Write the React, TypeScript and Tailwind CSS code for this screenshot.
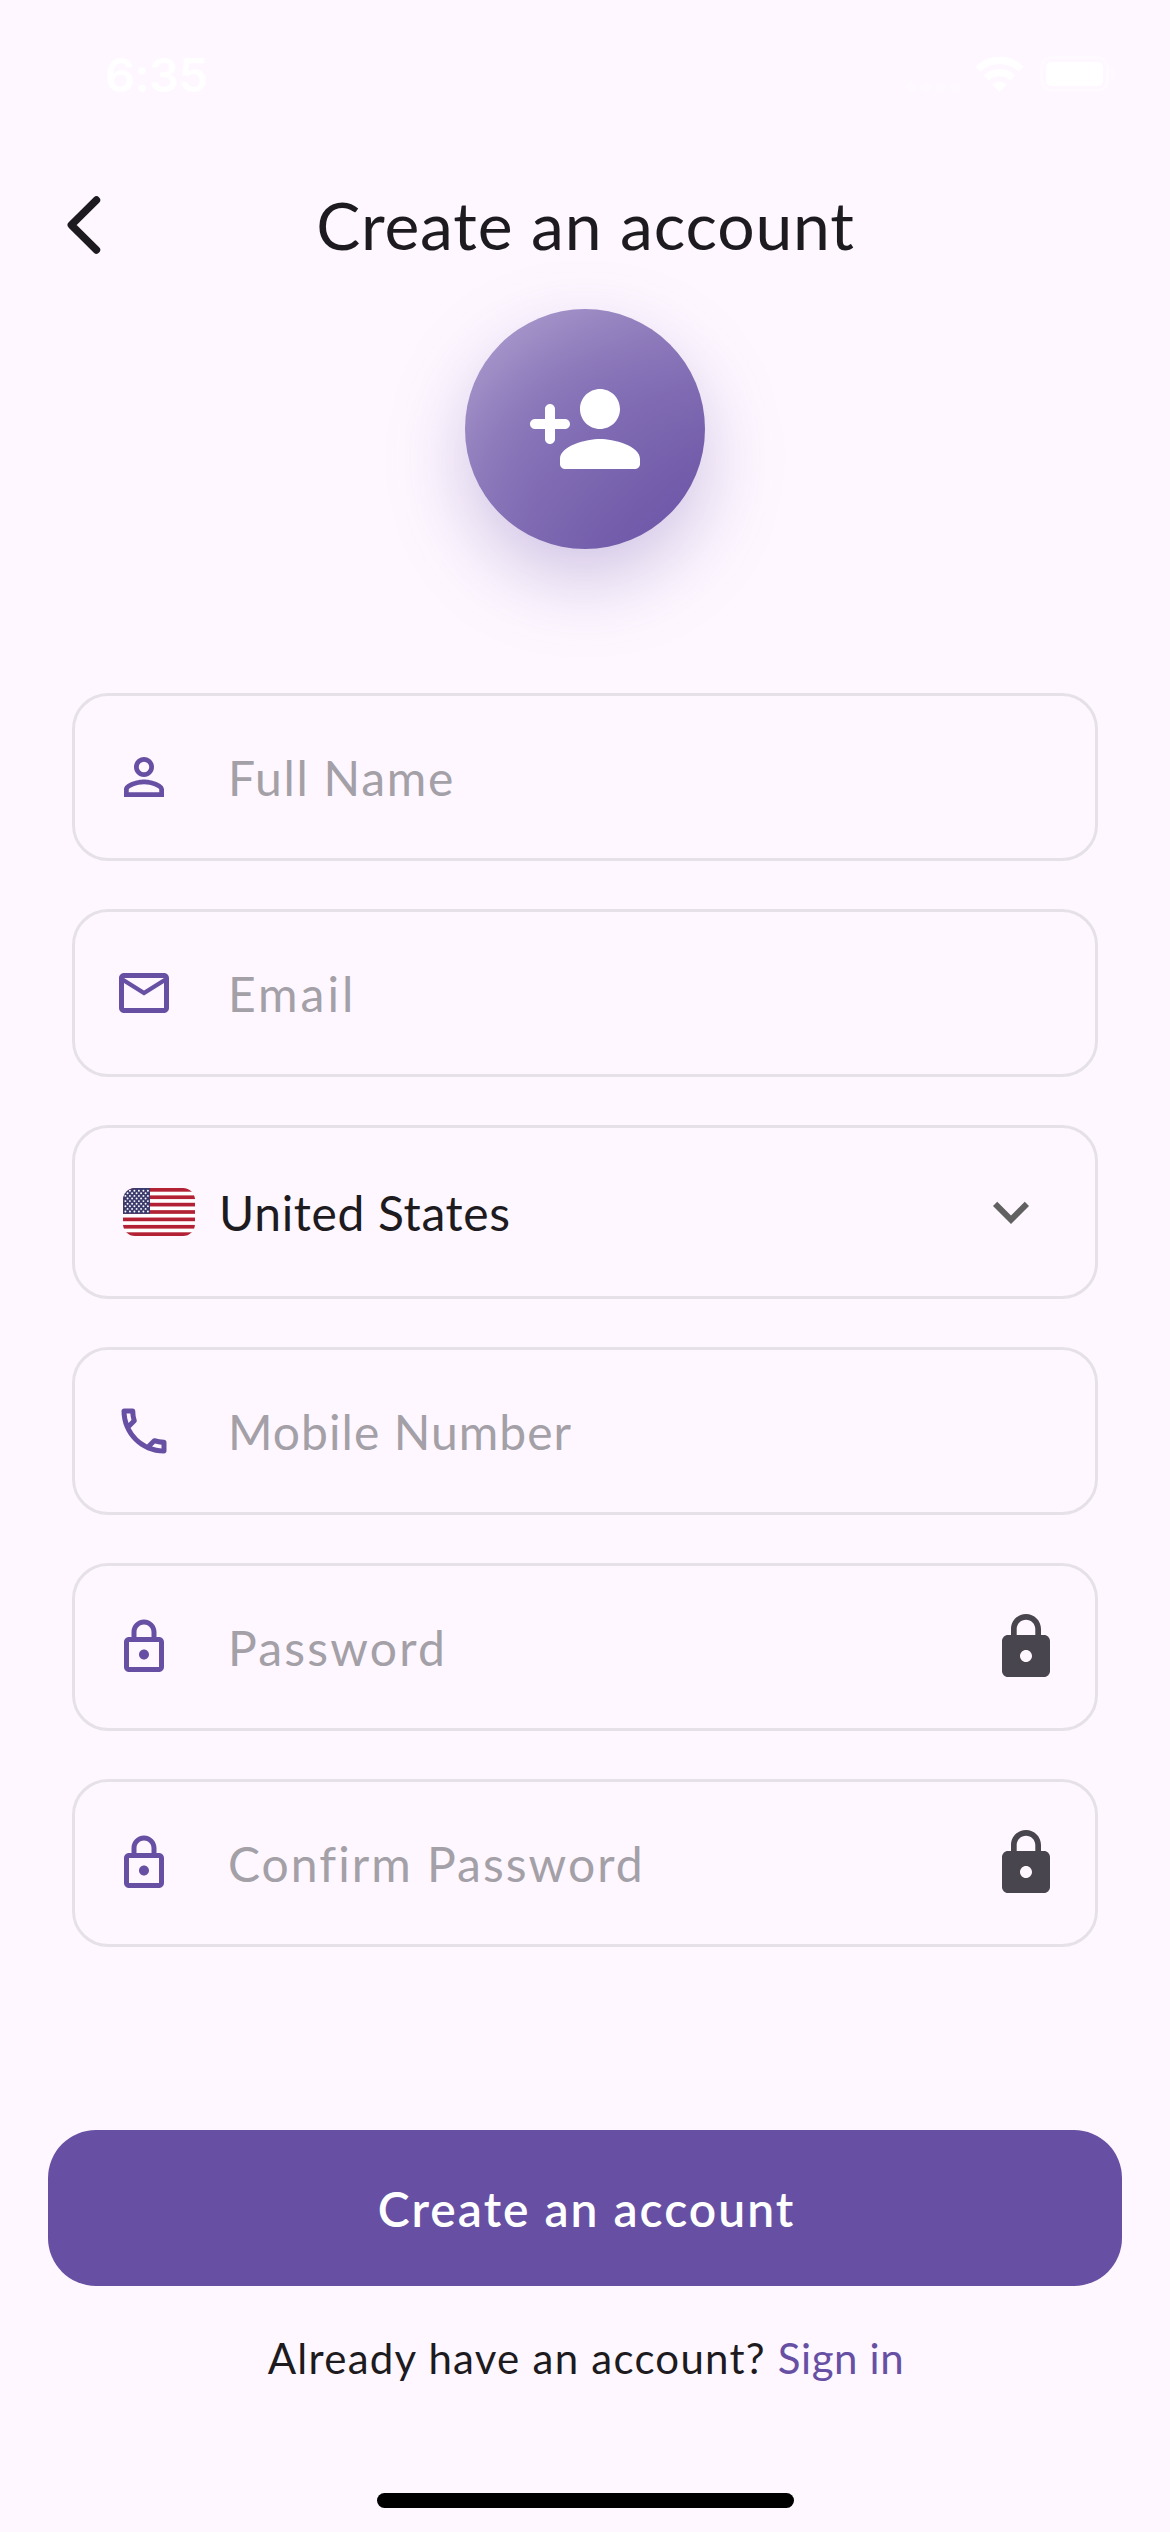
import type { ReactNode } from 'react';

const PATHS = {
  personAdd:
    'M15 12c2.21 0 4-1.79 4-4s-1.79-4-4-4-4 1.79-4 4 1.79 4 4 4zm-9-2V8c0-.55-.45-1-1-1s-1 .45-1 1v2H2c-.55 0-1 .45-1 1s.45 1 1 1h2v2c0 .55.45 1 1 1s1-.45 1-1v-2h2c.55 0 1-.45 1-1s-.45-1-1-1H6zm9 4c-2.67 0-8 1.34-8 4v1c0 .55.45 1 1 1h14c.55 0 1-.45 1-1v-1c0-2.66-5.33-4-8-4z',
  person:
    'M12 5.9a2.1 2.1 0 1 1 0 4.2 2.1 2.1 0 0 1 0-4.2m0 9c2.97 0 6.1 1.46 6.1 2.1v1.1H5.9V17c0-.64 3.13-2.1 6.1-2.1M12 4C9.79 4 8 5.79 8 8s1.79 4 4 4 4-1.79 4-4-1.79-4-4-4zm0 9c-2.67 0-8 1.34-8 4v3h16v-3c0-2.66-5.33-4-8-4z',
  mail:
    'M22 6c0-1.1-.9-2-2-2H4c-1.1 0-2 .9-2 2v12c0 1.1.9 2 2 2h16c1.1 0 2-.9 2-2V6zm-2 0-8 5-8-5h16zm0 12H4V8l8 5 8-5v10z',
  phone:
    'M6.54 5c.06.89.21 1.76.45 2.59l-1.2 1.2c-.41-1.2-.67-2.47-.76-3.79h1.51m9.86 12.02c.85.24 1.72.39 2.6.45v1.49c-1.32-.09-2.59-.35-3.8-.75l1.2-1.19M7.5 3H4c-.55 0-1 .45-1 1 0 9.39 7.61 17 17 17 .55 0 1-.45 1-1v-3.49c0-.55-.45-1-1-1-1.24 0-2.45-.2-3.57-.57a.84.84 0 0 0-.31-.05c-.26 0-.51.1-.71.29l-2.2 2.2a15.149 15.149 0 0 1-6.59-6.59l2.2-2.2c.28-.28.36-.67.25-1.02A11.36 11.36 0 0 1 8.5 4c0-.55-.45-1-1-1z',
  lockOutline:
    'M18 8h-1V6c0-2.76-2.24-5-5-5S7 3.24 7 6v2H6c-1.1 0-2 .9-2 2v10c0 1.1.9 2 2 2h12c1.1 0 2-.9 2-2V10c0-1.1-.9-2-2-2zM9 6c0-1.66 1.34-3 3-3s3 1.34 3 3v2H9V6zm9 14H6V10h12v10zm-6-3c1.1 0 2-.9 2-2s-.9-2-2-2-2 .9-2 2 .9 2 2 2z',
  lock:
    'M18 8h-1V6c0-2.76-2.24-5-5-5S7 3.24 7 6v2H6c-1.1 0-2 .9-2 2v10c0 1.1.9 2 2 2h12c1.1 0 2-.9 2-2V10c0-1.1-.9-2-2-2zm-6 9c-1.1 0-2-.9-2-2s.9-2 2-2 2 .9 2 2-.9 2-2 2zm3.1-9H8.9V6c0-1.71 1.39-3.1 3.1-3.1 1.71 0 3.1 1.39 3.1 3.1v2z',
  chevronDown: 'M7.41 8.59 12 13.17l4.59-4.58L18 10l-6 6-6-6 1.41-1.41z',
};

function Icon({ name, className }: { name: keyof typeof PATHS; className: string }) {
  return (
    <svg viewBox="0 0 24 24" fill="currentColor" className={`shrink-0 ${className}`} aria-hidden>
      <path d={PATHS[name]} />
    </svg>
  );
}

function StatusBar() {
  return (
    <div className="flex h-[148px] items-center justify-between pl-[105px] pr-[55px] text-white">
      <span className="font-['Inter',sans-serif] text-[47px] leading-none font-semibold tracking-[-0.5px]">6:35</span>
      <div className="flex items-center">
        <div className="mt-[26px] mr-[15px] flex gap-[6px] opacity-35">
          <i className="size-[9px] rounded-full bg-white" />
          <i className="size-[9px] rounded-full bg-white" />
          <i className="size-[9px] rounded-full bg-white" />
          <i className="size-[9px] rounded-full bg-white" />
        </div>
        <svg viewBox="0 0 49 36" className="mr-4 h-9 w-[49px]" fill="none" stroke="currentColor" aria-hidden>
          <path d="M2.8 13.2a31 31 0 0 1 43.4 0" strokeWidth="7.2" />
          <path d="M11.2 22a19 19 0 0 1 26.6 0" strokeWidth="7.2" />
          <path d="M24.5 36l-7.2-7.4a10.3 10.3 0 0 1 14.4 0z" fill="currentColor" stroke="none" />
        </svg>
        <div className="flex h-9 w-[69px] items-center rounded-xl border-[3px] border-white/35 p-[3px]">
          <div className="h-6 w-full rounded-[5px] bg-white" />
        </div>
        <div className="ml-[2px] h-3 w-1 rounded-r-full bg-white/40" />
      </div>
    </div>
  );
}

function Header() {
  return (
    <header className="flex h-[152px] items-center justify-center px-[60px]">
      <button className="flex w-12 justify-start" aria-label="Back">
        <svg viewBox="0 0 48 64" className="h-16 w-12" fill="none" stroke="currentColor" strokeWidth="7.4" strokeLinecap="round" strokeLinejoin="round">
          <path d="M36.5 8 11.3 33l25.2 25" />
        </svg>
      </button>
      <h1 className="flex-1 pt-px pl-px text-center text-[66px] leading-[80px] tracking-[0.83px]">Create an account</h1>
      <div className="w-12" />
    </header>
  );
}

function Field({ icon, trailing, children }: { icon: keyof typeof PATHS; trailing?: boolean; children: ReactNode }) {
  return (
    <div className="flex h-[168px] items-center rounded-[36px] border-[3px] border-[#e6e1e9] pr-[33px] pl-[39px] text-[#6750a4]">
      <Icon name={icon} className="size-[60px]" />
      <div className="ml-[54px] flex-1 pt-[2px] text-[#a4a0a7]">{children}</div>
      {trailing && <Icon name="lock" className="size-[72px] text-[#49454f]" />}
    </div>
  );
}

function Flag() {
  const stars = Array.from({ length: 9 }, (_, row) =>
    Array.from({ length: row % 2 ? 5 : 6 }, (_, col) => ({
      x: (row % 2 ? 4.6 : 2.4) + col * 4.5,
      y: 2.7 + row * 2.6,
    })),
  ).flat();
  return (
    <svg viewBox="0 0 72 48" className="h-12 w-[72px] rounded-xl" aria-label="United States flag">
      <rect width="72" height="48" fill="#fff" />
      {[0, 2, 4, 6, 8, 10, 12].map((i) => (
        <rect key={i} y={(i * 48) / 13} width="72" height={48 / 13} fill="#b22234" />
      ))}
      <rect width="27" height="25.85" fill="#3c3b6e" />
      {stars.map((s, i) => (
        <circle key={i} cx={s.x} cy={s.y} r="0.95" fill="#fff" />
      ))}
    </svg>
  );
}

export default function App() {
  return (
    <div className="flex h-[2532px] w-[1170px] flex-col overflow-hidden bg-[#fef7ff] font-['Lato',sans-serif] text-[#1d1b20]">
      <StatusBar />
      <Header />

      <div className="relative mx-auto mt-[9px] size-60">
        <div className="absolute inset-0 translate-y-[30px] rounded-full bg-[#6750a4]/30 blur-[38px]" />
        <div className="relative flex size-60 items-center justify-center rounded-full bg-[linear-gradient(135deg,rgba(103,80,164,0.5),#6750a4)]">
          <Icon name="personAdd" className="size-[120px] text-white" />
        </div>
      </div>

      <form className="mx-[72px] mt-36 flex flex-col gap-12 text-[48px] leading-[58px]">
        <Field icon="person"><span className="tracking-[1.71px]">Full Name</span></Field>
        <Field icon="mail"><span className="tracking-[3px]">Email</span></Field>
        <div className="flex h-[174px] items-center rounded-[36px] border-[3px] border-[#e6e1e9] pr-[48px] pl-12">
          <Flag />
          <span className="ml-6 flex-1 pt-[2px] tracking-[0.64px]">United States</span>
          <Icon name="chevronDown" className="size-[72px] text-[#616161]" />
        </div>
        <Field icon="phone"><span className="tracking-[1.04px]">Mobile Number</span></Field>
        <Field icon="lockOutline" trailing><span className="tracking-[2.2px]">Password</span></Field>
        <Field icon="lockOutline" trailing><span className="tracking-[2.03px]">Confirm Password</span></Field>
      </form>

      <button className="mx-12 mt-[183px] flex h-[156px] items-center justify-center rounded-[48px] bg-[#6750a4] pt-px pl-[3px] text-[48px] leading-[58px] font-semibold tracking-[2px] text-white">
        Create an account
      </button>

      <p className="mt-[46px] flex justify-center gap-[12px] pl-[2px] text-[42px] leading-[52px]">
        <span className="tracking-[1.25px]">Already have an account?</span>
        <a className="tracking-[0.6px] text-[#6750a4]">Sign in</a>
      </p>

      <div className="mx-auto mt-auto mb-6 h-[15px] w-[417px] rounded-full bg-black" />
    </div>
  );
}
